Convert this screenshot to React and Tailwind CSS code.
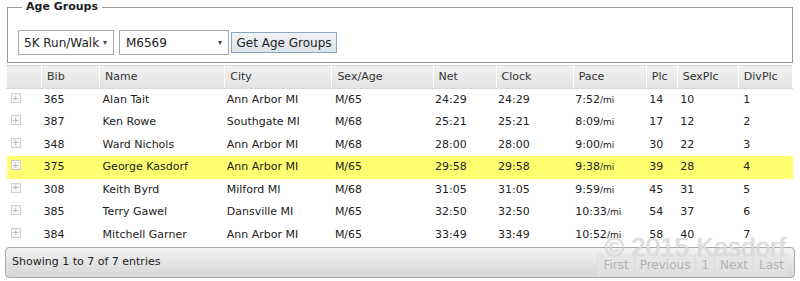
import React from 'react';

const ROWS = [
  { bib: '365', name: 'Alan Tait', city: 'Ann Arbor MI', sa: 'M/65', net: '24:29', clock: '24:29', pace: '7:52', plc: '14', sexplc: '10', div: '1' },
  { bib: '387', name: 'Ken Rowe', city: 'Southgate MI', sa: 'M/68', net: '25:21', clock: '25:21', pace: '8:09', plc: '17', sexplc: '12', div: '2' },
  { bib: '348', name: 'Ward Nichols', city: 'Ann Arbor MI', sa: 'M/68', net: '28:00', clock: '28:00', pace: '9:00', plc: '30', sexplc: '22', div: '3' },
  { bib: '375', name: 'George Kasdorf', city: 'Ann Arbor MI', sa: 'M/65', net: '29:58', clock: '29:58', pace: '9:38', plc: '39', sexplc: '28', div: '4', hi: true },
  { bib: '308', name: 'Keith Byrd', city: 'Milford MI', sa: 'M/68', net: '31:05', clock: '31:05', pace: '9:59', plc: '45', sexplc: '31', div: '5' },
  { bib: '385', name: 'Terry Gawel', city: 'Dansville MI', sa: 'M/65', net: '32:50', clock: '32:50', pace: '10:33', plc: '54', sexplc: '37', div: '6' },
  { bib: '384', name: 'Mitchell Garner', city: 'Ann Arbor MI', sa: 'M/65', net: '33:49', clock: '33:49', pace: '10:52', plc: '58', sexplc: '40', div: '7' },
];

// header labels with column widths (px)
const COLS = [
  { label: '', w: 'w-[35px]' },
  { label: 'Bib', w: 'w-[58px]' },
  { label: 'Name', w: 'w-[125px]' },
  { label: 'City', w: 'w-[107px]' },
  { label: 'Sex/Age', w: 'w-[101px]' },
  { label: 'Net', w: 'w-[63px]' },
  { label: 'Clock', w: 'w-[77px]' },
  { label: 'Pace', w: 'w-[73px]' },
  { label: 'Plc', w: 'w-[31px]' },
  { label: 'SexPlc', w: 'w-[61px]' },
  { label: 'DivPlc', w: 'w-[54px]' },
];

function Plus() {
  return (
    <span className="flex h-[10px] w-[10px] items-center justify-center border border-[#cfcfcf] bg-[#f7f7f7] text-[9px] leading-none text-[#b5b5b5]">
      +
    </span>
  );
}

export default function App() {
  return (
    <div className="h-[281px] w-[800px] overflow-hidden bg-white font-['DejaVu_Sans',Verdana,sans-serif] text-[11px] text-[#222]">
      {/* filtros */}
      <fieldset className="mx-[7px] h-[63px] border border-[#9a9a9a] px-[10px] pt-[16px]">
        <legend className="ml-[4px] px-[4px] text-[11px] font-bold leading-[14px] text-[#222]">
          Age Groups
        </legend>
        <div className="flex items-center gap-[5px]">
          <div className="flex h-[25px] w-[96px] items-center justify-between border border-[#a9a9a9] bg-white pl-[5px] pr-[6px] text-[12px]">
            <span>5K Run/Walk</span>
            <span className="text-[8px] text-[#444]">▾</span>
          </div>
          <div className="flex h-[25px] w-[110px] items-center justify-between border border-[#a9a9a9] bg-white pl-[6px] pr-[6px] text-[12px]">
            <span>M6569</span>
            <span className="text-[8px] text-[#444]">▾</span>
          </div>
          <button className="-ml-[3px] h-[21px] w-[106px] border border-[#8ea4bf] bg-gradient-to-b from-[#f0f2f5] to-[#dde3ea] text-[12px] text-[#222]">
            Get Age Groups
          </button>
        </div>
      </fieldset>

      {/* tabela */}
      <table className="ml-[6px] mt-[2px] w-[787px] table-fixed border-collapse">
        <thead>
          <tr className="h-[23px]">
            {COLS.map((c, i) => (
              <th
                key={i}
                className={`${c.w} border-x border-y border-x-white border-y-[#d9d9d9] bg-gradient-to-b from-[#f1f1f1] to-[#e3e3e3] pl-[5px] text-left font-normal text-[#333]`}
              >
                {c.label}
              </th>
            ))}
          </tr>
        </thead>
        <tbody>
          {ROWS.map((r) => (
            <tr key={r.bib} className={`h-[22.5px] ${r.hi ? 'bg-[#ffff70]' : 'bg-white'}`}>
              <td className="pl-[4px] align-top pt-[4px]">
                <Plus />
              </td>
              <td className="pl-[2px]">{r.bib}</td>
              <td className="pl-[3px]">{r.name}</td>
              <td className="pl-[2px]">{r.city}</td>
              <td className="pl-[3px]">{r.sa}</td>
              <td className="pl-[2px]">{r.net}</td>
              <td className="pl-[2px]">{r.clock}</td>
              <td className="pl-[2px]">
                {r.pace}
                <span className="text-[9px]">/mi</span>
              </td>
              <td className="pl-[3px]">{r.plc}</td>
              <td className="pl-[3px]">{r.sexplc}</td>
              <td className="pl-[5px]">{r.div}</td>
            </tr>
          ))}
        </tbody>
      </table>

      {/* rodapé */}
      <div className="relative mx-[5px] mt-[1px] flex h-[31px] items-center justify-between rounded-[4px] border border-[#a8a8a8] bg-gradient-to-b from-[#f3f3f3] to-[#d6d6d6] pl-[6px] pr-[5px]">
        <span className="text-[11px] text-[#222]">Showing 1 to 7 of 7 entries</span>
        <div className="flex items-center pt-[4px] text-[12px] text-[#b3b3b3]">
          {['First', 'Previous', '1', 'Next', 'Last'].map((p) => (
            <span key={p} className="border-l border-[#dcdcdc] bg-[#e4e4e4]/60 px-[5px] py-[2px]">
              {p}
            </span>
          ))}
        </div>
        <span className="pointer-events-none absolute right-[8px] top-[-14px] font-['Liberation_Sans',Arial,sans-serif] text-[26px] leading-none text-white/60 [text-shadow:0_0_1px_#a8a8a8]">
          © 2015 Kasdorf
        </span>
      </div>
    </div>
  );
}
